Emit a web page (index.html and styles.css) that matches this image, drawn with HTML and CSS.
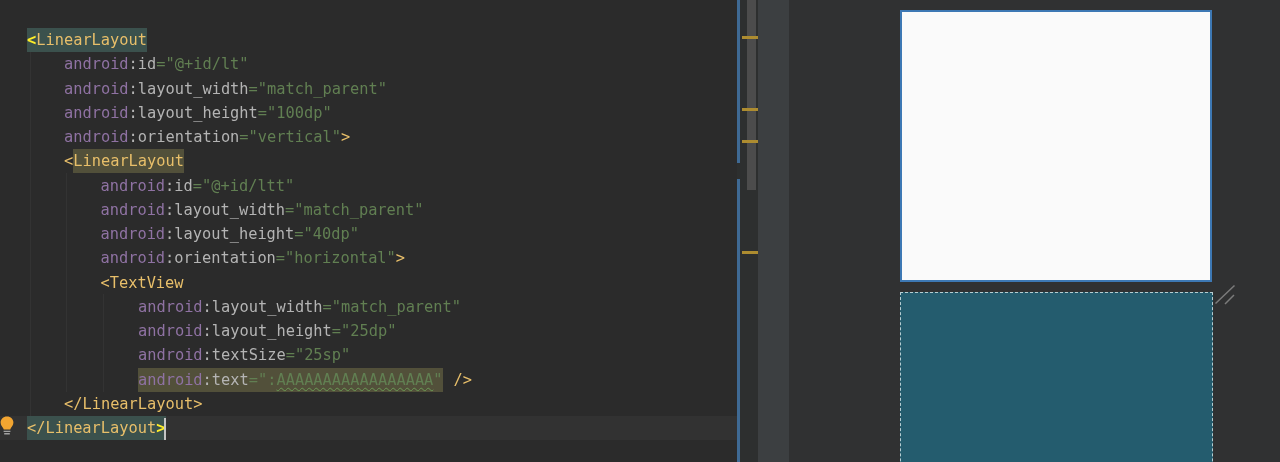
FILE: index.html
```html
<!DOCTYPE html>
<html lang="en">
<head>
<meta charset="utf-8">
<title>activity_main.xml</title>
<link rel="stylesheet" href="styles.css">
</head>
<body>
<div class="ide">
  <section class="editor">
    <span class="guide guide-a"></span>
    <span class="guide guide-b"></span>
    <span class="guide guide-c"></span>
    <div class="code">
      <div class="line"><span class="match-tag"><span class="bright">&lt;</span><span class="tag">LinearLayout</span></span></div>
      <div class="line i1"><span class="ns">android</span><span class="attr">:id</span><span class="str">="@+id/lt"</span></div>
      <div class="line i1"><span class="ns">android</span><span class="attr">:layout_width</span><span class="str">="match_parent"</span></div>
      <div class="line i1"><span class="ns">android</span><span class="attr">:layout_height</span><span class="str">="100dp"</span></div>
      <div class="line i1"><span class="ns">android</span><span class="attr">:orientation</span><span class="str">="vertical"</span><span class="tag">&gt;</span></div>
      <div class="line i1"><span class="tag">&lt;</span><span class="warn-tag tag">LinearLayout</span></div>
      <div class="line i2"><span class="ns">android</span><span class="attr">:id</span><span class="str">="@+id/ltt"</span></div>
      <div class="line i2"><span class="ns">android</span><span class="attr">:layout_width</span><span class="str">="match_parent"</span></div>
      <div class="line i2"><span class="ns">android</span><span class="attr">:layout_height</span><span class="str">="40dp"</span></div>
      <div class="line i2"><span class="ns">android</span><span class="attr">:orientation</span><span class="str">="horizontal"</span><span class="tag">&gt;</span></div>
      <div class="line i2"><span class="tag">&lt;TextView</span></div>
      <div class="line i3"><span class="ns">android</span><span class="attr">:layout_width</span><span class="str">="match_parent"</span></div>
      <div class="line i3"><span class="ns">android</span><span class="attr">:layout_height</span><span class="str">="25dp"</span></div>
      <div class="line i3"><span class="ns">android</span><span class="attr">:textSize</span><span class="str">="25sp"</span></div>
      <div class="line i3"><span class="warn-attr"><span class="ns">android</span><span class="attr">:text</span><span class="str">=":<span class="squiggle">AAAAAAAAAAAAAAAAA</span>"</span></span><span class="tag self-close">/&gt;</span></div>
      <div class="line i1"><span class="tag">&lt;/LinearLayout&gt;</span></div>
      <div class="line current"><svg class="bulb" width="14" height="20" viewBox="0 0 14 20" aria-hidden="true"><path d="M7 0.500C3.200 0.500 0.600 3.200 0.600 6.600c0 2.600 1.600 4.200 2.600 5.600.4.6.5 1 .5 1.400h6.600c0-.4.1-.8.5-1.400 1-1.400 2.600-3 2.600-5.600C13.400 3.200 10.800.5 7 .5z" fill="#f2a531"/><path d="M3.600 14.800h6.800v1.300H3.600zM4.200 17.100h5.600v1.300H4.200z" fill="#a3a3a3"/></svg><span class="match-tag"><span class="tag">&lt;/LinearLayout</span><span class="bright">&gt;</span><span class="caret"></span></span></div>
    </div>
    <div class="stripe">
      <span class="change change-a"></span>
      <span class="change change-b"></span>
      <span class="thumb"></span>
      <span class="mark mark-a"></span>
      <span class="mark mark-b"></span>
      <span class="mark mark-c"></span>
      <span class="mark mark-d"></span>
    </div>
  </section>
  <div class="splitter"></div>
  <section class="preview">
    <div class="design-col">
      <div class="screen-design"></div>
      <div class="screen-blueprint"></div>
    </div>
    <svg class="resize" width="22" height="22" viewBox="0 0 22 22" aria-hidden="true"><path d="M1.500 19.500L20.500 1.500M11 20L20 11" stroke="#7b7b7b" stroke-width="1.500" fill="none"/></svg>
  </section>
</div>
</body>
</html>
```

FILE: styles.css
```css
* { box-sizing: border-box; }
html, body { margin: 0; height: 100%; overflow: hidden; background: #2b2b2b; }
.ide { display: flex; width: 1280px; height: 462px; overflow: hidden; }

.editor { position: relative; flex: 0 0 758px; background: #2b2b2b; }
.code {
  padding-top: 28px;
  font-family: "DejaVu Sans Mono", monospace;
  font-size: 15.33px;
  color: #a9b7c6;
  filter: blur(0.35px);
}
.line { height: 24.25px; line-height: 24.25px; padding-left: 27px; white-space: pre; position: relative; }
.i1 { padding-left: 64px; }
.i2 { padding-left: 100.500px; }
.i3 { padding-left: 138px; }
.current { background: #323232; }

.tag { color: #e8bf6a; }
.bright { color: #ffef28; font-weight: 700; }
.ns { color: #8f72a3; }
.attr { color: #b4b4b4; }
.str { color: #617f52; }
.match-tag { display: inline-block; height: 24px; background: #3b514d; }
.warn-tag { display: inline-block; height: 24px; background: #52503a; }
.warn-attr { display: inline-block; height: 24.25px; background: #52503a; }
.squiggle { text-decoration: underline wavy #6a9955 1px; text-underline-offset: 2px; }
.self-close { margin-left: 11px; }
.caret { display: inline-block; width: 2px; height: 22px; margin-left: -1px; vertical-align: middle; background: #c4c4c4; }
.bulb { position: absolute; left: 0; top: 0; }

.guide { position: absolute; width: 1px; background: #333333; }
.guide-a { left: 30px; top: 52px; height: 364px; }
.guide-b { left: 66px; top: 173px; height: 219px; }
.guide-c { left: 103px; top: 294px; height: 98px; }

.stripe { position: absolute; left: 737px; top: 0; width: 21px; height: 462px; background: #2d2f2f; }
.change { position: absolute; left: 0; width: 3px; background: #3f6a94; }
.change-a { top: 0; height: 163px; }
.change-b { top: 179px; height: 283px; }
.thumb { position: absolute; left: 10px; top: 0; width: 9px; height: 190px; background: #4c4c4c; }
.mark { position: absolute; left: 5px; width: 16px; height: 3px; background: #ad8c30; }
.mark-a { top: 36px; }
.mark-b { top: 108px; }
.mark-c { top: 140px; }
.mark-d { top: 251px; }

.splitter { flex: 0 0 31px; background: #3c3f41; }

.preview { position: relative; flex: 1; display: flex; padding: 10px 0 0 111px; background: #303132; }
.design-col { display: flex; flex-direction: column; gap: 10px; width: 313px; flex: none; }
.screen-design { flex: 0 0 272px; width: 312px; background: #fafafa; border: 2px solid #3d78b4; }
.screen-blueprint { flex: 0 0 240px; background: #245c6e; border: 1px dashed #b5cdd2; }
.resize { position: absolute; left: 425px; top: 284px; }
```
